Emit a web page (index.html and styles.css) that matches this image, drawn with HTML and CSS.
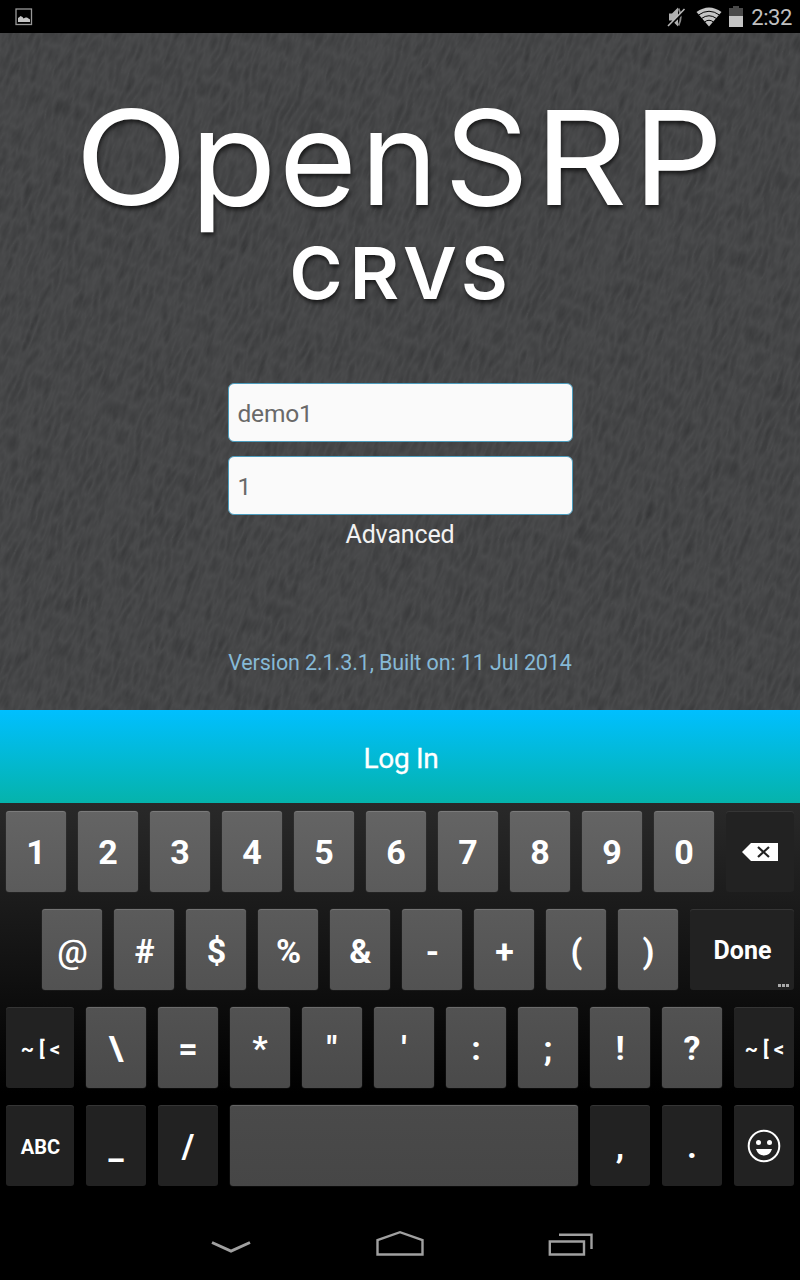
FILE: index.html
```html
<!DOCTYPE html>
<html lang="en">
<head>
<meta charset="utf-8">
<title>OpenSRP CRVS</title>
<link rel="stylesheet" href="styles.css">
</head>
<body>
<div class="screen">
  <header class="status">
    <svg class="status-shot" width="18" height="18" viewBox="0 0 18 18"><rect x="1" y="1" width="15.5" height="15.5" fill="none" stroke="#989898" stroke-width="1.3"/><path d="M3 14V10L4.500 9L5.500 8L7.500 9L8.500 10.500L10.500 9.500L12 9.500L15 11.500V14Z" fill="#c4c4c4"/></svg>
    <div class="status-right">
      <svg width="20" height="22" viewBox="0 0 20 22"><path d="M2 7.500H5L11 1.500V20.500L5 14.500H2Z" fill="#b0b0b0"/><path d="M11.500 2.500Q16 11 11.500 19.500" fill="none" stroke="#888" stroke-width="1.800"/><path d="M2 20.500L18.500 4.500" stroke="#000" stroke-width="2"/><path d="M1 20L17.500 3" stroke="#b8b8b8" stroke-width="1.600"/></svg>
      <svg width="26" height="20" viewBox="0 0 26 20"><path d="M.5 5Q13-4 25.500 5L13 19.500Z" fill="#c4c4c4"/><path d="M2.500 8Q13 .5 23.500 8M5.500 11.500Q13 6 20.500 11.500M8.500 15Q13 11.500 17.500 15" fill="none" stroke="#000" stroke-width="1"/></svg>
      <svg width="14" height="21" viewBox="0 0 14 21"><path d="M0 2H4V0H10V2H14V10H0Z" fill="#4a4a4a"/><path d="M0 10H14V21H0Z" fill="#c4c4c4"/></svg>
      <span class="clock">2:32</span>
    </div>
  </header>

  <main class="login">
    <svg class="leather" width="1100" height="1000">
      <filter id="grain" x="0" y="0" width="100%" height="100%" color-interpolation-filters="sRGB">
        <feTurbulence type="turbulence" baseFrequency="0.14 0.045" numOctaves="2" seed="8"/>
        <feColorMatrix values="-0.08 -0.03 0 0 0.297  -0.08 -0.03 0 0 0.3  -0.08 -0.03 0 0 0.305  0 0 0 0 1"/>
      </filter>
      <rect width="1100" height="1000" filter="url(#grain)"/>
    </svg>
    <svg class="logo" width="660" height="220" viewBox="70 95 660 220">
      <g class="logo-main">
        <text transform="translate(74.800 205) scale(1.130 1)">O</text>
        <text transform="translate(190 205) scale(1.080 1)">p</text>
        <text transform="translate(279 205) scale(1.020 1)">e</text>
        <text x="360.500" y="205">n</text>
        <text x="444.500" y="205">S</text>
        <text transform="translate(534.800 205) scale(1.100 1)">R</text>
        <text transform="translate(633 205) scale(1.080 1)">P</text>
      </g>
      <g class="logo-sub">
        <text x="289.500" y="299">C</text>
        <text transform="translate(349.500 299) scale(1.060 1)">R</text>
        <text transform="translate(403 299) scale(1.030 1)">V</text>
        <text x="461" y="299">S</text>
      </g>
    </svg>
    <form class="form">
      <input class="field" type="text" value="demo1">
      <input class="field" type="text" value="1">
      <a class="advanced">Advanced</a>
    </form>
    <p class="version">Version 2.1.3.1, Built on: 11 Jul 2014</p>
  </main>

  <button class="submit">Log In</button>

  <section class="keyboard">
    <div class="row row-1">
      <span class="key">1</span><span class="key">2</span><span class="key">3</span><span class="key">4</span><span class="key">5</span><span class="key">6</span><span class="key">7</span><span class="key">8</span><span class="key">9</span><span class="key">0</span>
      <span class="key dark grow"><svg width="36" height="18" viewBox="0 0 36 18"><path d="M0 9L9 0H36V18H9Z" fill="#fff"/><path d="M16 4L27 14M27 4L16 14" stroke="#222" stroke-width="2.200"/></svg></span>
    </div>
    <div class="row row-2">
      <span class="key at">@</span><span class="key">#</span><span class="key">$</span><span class="key">%</span><span class="key">&amp;</span><span class="key">-</span><span class="key">+</span><span class="key">(</span><span class="key">)</span>
      <span class="key dark grow done">Done<svg class="dots" width="11" height="3" viewBox="0 0 11 3"><path d="M0 0H3V3H0ZM4 0H7V3H4ZM8 0H11V3H8Z" fill="#aaa"/></svg></span>
    </div>
    <div class="row row-3">
      <span class="key dark wide sym"><i>~</i><i>[</i><i>&lt;</i></span><span class="key">\</span><span class="key">=</span><span class="key">*</span><span class="key">"</span><span class="key">'</span><span class="key">:</span><span class="key">;</span><span class="key">!</span><span class="key">?</span><span class="key dark sym"><i>~</i><i>[</i><i>&lt;</i></span>
    </div>
    <div class="row row-4">
      <span class="key dark wide abc">ABC</span><span class="key dark">_</span><span class="key dark">/</span><span class="key grow"></span><span class="key dark">,</span><span class="key dark">.</span>
      <span class="key dark smiley"><svg width="34" height="34" viewBox="0 0 34 34"><circle cx="17" cy="17" r="15.300" fill="none" stroke="#fff" stroke-width="2"/><circle cx="11.500" cy="13.500" r="2.500" fill="#fff"/><circle cx="22.500" cy="13.500" r="2.500" fill="#fff"/><path d="M9 20H25Q23 26.500 17 26.500T9 20Z" fill="#fff"/></svg></span>
    </div>
  </section>

  <nav class="nav">
    <svg width="40" height="26" viewBox="0 0 40 26"><path d="M1 12.500L20 21L39 12.500" fill="none" stroke="#a0a0a0" stroke-width="3"/></svg>
    <svg width="48" height="26" viewBox="0 0 48 26"><path d="M1.500 24.500V10L24 2.200L46.500 10V24.500Z" fill="none" stroke="#a0a0a0" stroke-width="2.400"/></svg>
    <svg width="46" height="26" viewBox="0 0 46 26"><path d="M1.800 11.500H36V24.500H1.800ZM11 4.700H43.500V19" fill="none" stroke="#a0a0a0" stroke-width="2.400"/></svg>
  </nav>
</div>
</body>
</html>
```

FILE: styles.css
```css
* { box-sizing: border-box; }
body { margin: 0; background: #000; font-family: Roboto, sans-serif; }
.screen { width: 800px; height: 1280px; display: flex; flex-direction: column; overflow: hidden; background: #000; }
.status { height: 33px; flex: none; display: flex; justify-content: space-between; align-items: center; padding: 0 8px 0 15px; }
.status-right { display: flex; align-items: center; gap: 8px; }
.status-right svg:nth-child(2) { margin-right: -1px; margin-left: 1px; }
.clock { color: #c0c0c0; font-size: 22px; line-height: 33px; letter-spacing: -0.4px; padding-top: 2px; }

.login { position: relative; height: 677px; flex: none; overflow: hidden; background: #454648; display: flex; flex-direction: column; align-items: center; padding-top: 62px; }
.leather { position: absolute; left: -150px; top: -160px; transform: rotate(20deg); }
.logo { position: relative; flex: none; overflow: visible; }
.logo-main, .logo-sub { font-family: Inter, sans-serif; fill: #fff; filter: drop-shadow(1px 3px 2px rgba(0,0,0,.65)); }
.logo-main { font-size: 131px; font-weight: 400; }
.logo-sub { font-size: 72px; font-weight: 600; }
.form { position: relative; width: 345px; margin-top: 68px; display: flex; flex-direction: column; gap: 14px; }
.field { width: 345px; height: 59px; border: 1px solid #4c9cbd; border-radius: 6px; background: #fafafa; color: #696969; font: 24.5px Roboto, sans-serif; letter-spacing: -0.2px; padding: 2px 9px 0; outline: none; }
.advanced { color: #f2f2f2; font-size: 25px; letter-spacing: -0.15px; line-height: 30px; text-align: center; margin-top: -9px; }
.version { position: relative; margin: 100px 0 0; color: #86b9d6; font-size: 21.5px; letter-spacing: -0.1px; line-height: 26px; white-space: nowrap; }

.submit { height: 93px; flex: none; border: 0; padding: 3px 0 0 2px; color: #fff; font: 28px Roboto, sans-serif; letter-spacing: -0.3px; -webkit-text-stroke: 0.3px #fff; background: linear-gradient(#00bfff, #05b3ab); }

.keyboard { height: 397px; flex: none; padding: 8px 6px 0 6px; display: flex; flex-direction: column; gap: 17px; background: linear-gradient(#292929, #000 73%); }
.row { display: flex; gap: 12px; height: 81px; }
.row-2 { padding-left: 36px; }
.key { position: relative; width: 60px; flex: none; display: flex; align-items: center; justify-content: center; border-radius: 3px; color: #fff; font-size: 34px; font-weight: 700; box-shadow: inset 0 1px 0 rgba(255,255,255,.15), 0 0 0 .5px rgba(90,90,90,.25); }
.row-1 .key { background: linear-gradient(#646464, #5b5b5b); }
.row-2 .key { background: linear-gradient(#5b5b5b, #525252); padding: 2px 0 0 1px; }
.row-3 .key { background: linear-gradient(#525252, #4a4a4a); }
.row-4 .key { background: linear-gradient(#4a4a4a, #464646); }
.row .dark { background: #222; box-shadow: inset 0 1px 0 rgba(255,255,255,.09); }
.grow { flex: 1; width: auto; }
.wide { width: 68px; }
.at { font-weight: 500; }
.done { font-size: 25px; }
.dots { position: absolute; right: 5px; bottom: 3px; }
.sym { font-size: 20.5px; gap: 5px; padding: 3px 0 0 1px; }
.sym i { font-style: normal; }
.row .abc { font-size: 20px; padding: 2px 0 0 1px; }
.row .smiley { padding-right: 1px; }

.nav { height: 80px; display: flex; justify-content: space-between; padding: 30px 206px 0 211px; }
```
